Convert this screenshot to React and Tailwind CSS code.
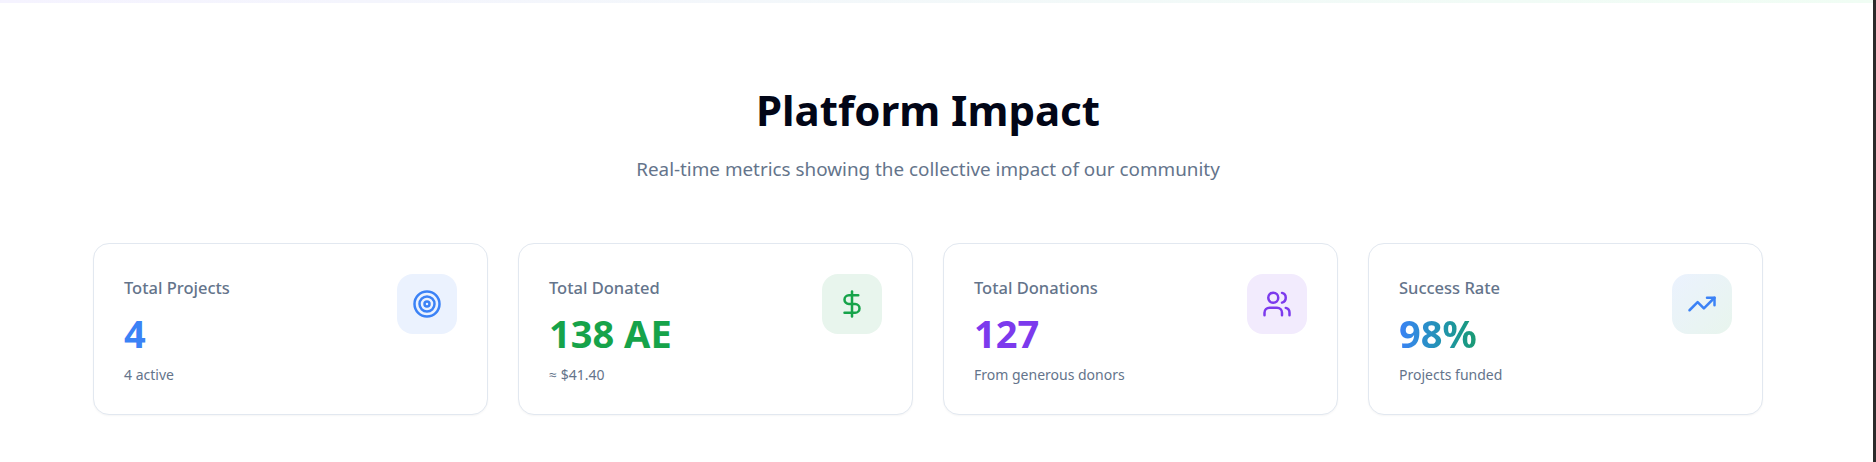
import React from "react";
import { Target, DollarSign, Users, TrendingUp } from "lucide-react";

const cards = [
  { label: "Total Projects", value: "4", valueClass: "text-[#3b82f6]", sub: "4 active", iconBox: "bg-[#ebf2fe]", Icon: Target, iconClass: "text-[#3b82f6]" },
  { label: "Total Donated", value: "138 AE", valueClass: "text-[#16a34a]", sub: "≈ $41.40", iconBox: "bg-[#e8f5ed]", Icon: DollarSign, iconClass: "text-[#16a34a]" },
  { label: "Total Donations", value: "127", valueClass: "text-[#7c3aed]", sub: "From generous donors", iconBox: "bg-[#f2ebfd]", Icon: Users, iconClass: "text-[#7c3aed]" },
  { label: "Success Rate", value: "98%", valueClass: "bg-gradient-to-r from-[#3b82f6] to-[#1a9a70] bg-clip-text text-transparent", sub: "Projects funded", iconBox: "bg-gradient-to-br from-[#ebf2fe] to-[#e8f5ed]", Icon: TrendingUp, iconClass: "text-[#3b82f6]" },
];

function Card({ label, value, valueClass, sub, iconBox, Icon, iconClass }) {
  return (
    <div className="flex h-[172px] items-start justify-between rounded-2xl border border-[#e2e8f0] bg-white px-[30px] pt-[30px] shadow-[0_1px_2px_rgba(0,0,0,0.04)]">
      <div className="flex flex-col pt-[2px]">
        <p className="text-[16.5px] leading-[24px] font-medium text-[#64748b]">{label}</p>
        <p className="mt-[11px] w-fit text-[38px] leading-[44px] font-bold"><span className={valueClass}>{value}</span></p>
        <p className="mt-[10px] text-[14px] leading-[20px] text-[#64748b]">{sub}</p>
      </div>
      <div className={`flex h-[60px] w-[60px] items-center justify-center rounded-2xl ${iconBox}`}>
        <Icon className={`h-[30px] w-[30px] ${iconClass}`} />
      </div>
    </div>
  );
}

export default function App() {
  return (
    <div className="flex h-[462px] w-full overflow-hidden bg-white font-['Noto_Sans','Open_Sans',sans-serif]">
      <div className="min-w-0 flex-1">
        <div className="h-[3px] bg-gradient-to-r from-[#f5f3ff] to-[#f0fdf4]" />
        <div className="ml-[93px] w-[1670px] pt-[77px]">
          <h2 className="text-center text-[42px] leading-[60px] font-bold text-[#020617]">Platform Impact</h2>
          <p className="mt-[14px] text-center text-[18.85px] leading-[30px] text-[#64748b]">Real-time metrics showing the collective impact of our community</p>
          <div className="mt-[59px] grid grid-cols-4 gap-[30px]">
            {cards.map((c) => <Card key={c.label} {...c} />)}
          </div>
        </div>
      </div>
      <div className="h-full w-[3px] shrink-0 bg-[#2b2b2b]" />
    </div>
  );
}
